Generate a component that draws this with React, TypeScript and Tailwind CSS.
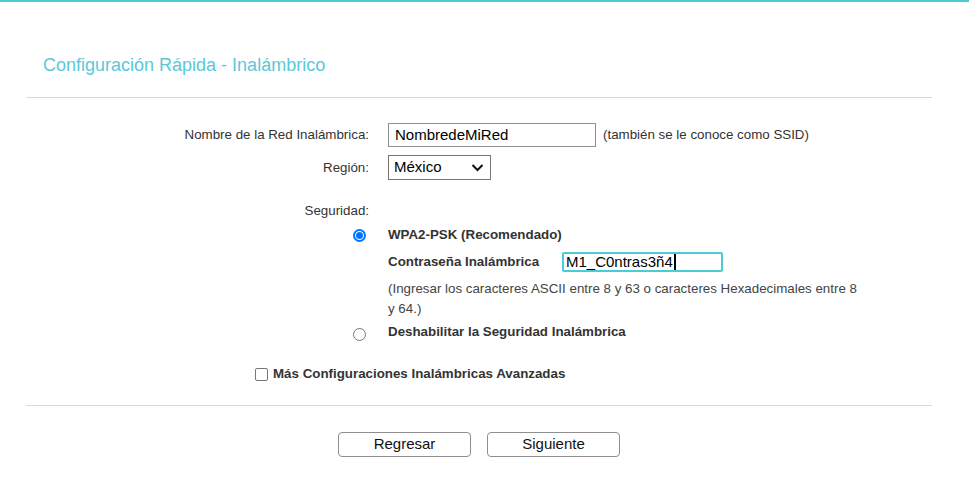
import React from "react";

const Radio = ({ checked }: { checked?: boolean }) =>
  checked ? (
    <span className="flex h-[13px] w-[13px] items-center justify-center rounded-full border-2 border-[#0075ff] bg-white">
      <span className="h-[7px] w-[7px] rounded-full bg-[#0075ff]" />
    </span>
  ) : (
    <span className="block h-[13px] w-[13px] rounded-full border border-[#767676] bg-white" />
  );

const App = () => {
  return (
    <div className="min-h-screen bg-white font-['Liberation_Sans',Arial,sans-serif] text-[13.33px] text-[#333]">
      <div className="h-[2px] bg-[#4acbd6]" />

      {/* Title */}
      <div className="pl-[43px] pt-[53px] text-[18px] leading-[20px] text-[#5bc8d9]">
        Configuración Rápida - Inalámbrico
      </div>
      <div className="ml-[26px] mt-[22px] h-px w-[906px] bg-[#d9d9d9]" />

      {/* Network name */}
      <div className="mt-[25px] flex h-[24px] items-center">
        <div className="w-[369px] text-right">Nombre de la Red Inalámbrica:</div>
        <div className="ml-[19px] flex h-[24px] w-[208px] items-center border border-[#8f8f8f] px-[6px] text-[15px] text-black">
          NombredeMiRed
        </div>
        <div className="ml-[7px]">(también se le conoce como SSID)</div>
      </div>

      {/* Region */}
      <div className="mt-[8px] flex h-[25px] items-center">
        <div className="w-[369px] text-right">Región:</div>
        <div className="ml-[19px] flex h-[25px] w-[103px] items-center justify-between border border-[#767676] pl-[5px] pr-[6px] text-[15px] text-black">
          <span>México</span>
          <svg width="13" height="9" viewBox="0 0 13 9" fill="none">
            <path d="M1.5 2L6.5 7L11.5 2" stroke="#111" strokeWidth="2" />
          </svg>
        </div>
      </div>

      {/* Security */}
      <div className="mt-[21px] flex h-[20px] items-center">
        <div className="w-[369px] text-right">Seguridad:</div>
      </div>

      <div className="mt-[4px] flex h-[20px] items-center">
        <div className="flex w-[369px] justify-end pr-[3px]">
          <Radio checked />
        </div>
        <div className="ml-[19px] font-bold">WPA2-PSK (Recomendado)</div>
      </div>

      <div className="mt-[7px] flex h-[20px] items-center">
        <div className="ml-[388px] w-[174px] font-bold">Contraseña Inalámbrica</div>
        <div className="flex h-[20px] w-[161px] items-center rounded-[2px] border-2 border-[#4acbd6] px-[2px] text-[15px] text-black">
          M1_C0ntras3ñ4
          <span className="ml-px h-[16px] w-[2px] bg-black" />
        </div>
      </div>

      <div className="ml-[388px] mt-[7px] w-[474px] leading-[20px] text-[#444]">
        (Ingresar los caracteres ASCII entre 8 y 63 o caracteres Hexadecimales entre 8 y 64.)
      </div>

      <div className="mt-[3px] flex h-[20px] items-center">
        <div className="flex w-[369px] justify-end pr-[3px] pt-[4px]">
          <Radio />
        </div>
        <div className="ml-[19px] font-bold">Deshabilitar la Seguridad Inalámbrica</div>
      </div>

      {/* Advanced */}
      <div className="mt-[22px] flex h-[20px] items-center pl-[255px]">
        <span className="block h-[13px] w-[13px] rounded-[2px] border border-[#767676] bg-white" />
        <span className="ml-[5px] font-bold">Más Configuraciones Inalámbricas Avanzadas</span>
      </div>

      <div className="ml-[26px] mt-[21px] h-px w-[906px] bg-[#d9d9d9]" />

      {/* Buttons */}
      <div className="mt-[26px] flex gap-[16px] pl-[338px]">
        <button className="h-[25px] w-[133px] rounded-[4px] border border-[#8f8f8f] bg-white text-[15px] text-[#111]">
          Regresar
        </button>
        <button className="h-[25px] w-[133px] rounded-[4px] border border-[#8f8f8f] bg-white text-[15px] text-[#111]">
          Siguiente
        </button>
      </div>
    </div>
  );
};

export default App;
